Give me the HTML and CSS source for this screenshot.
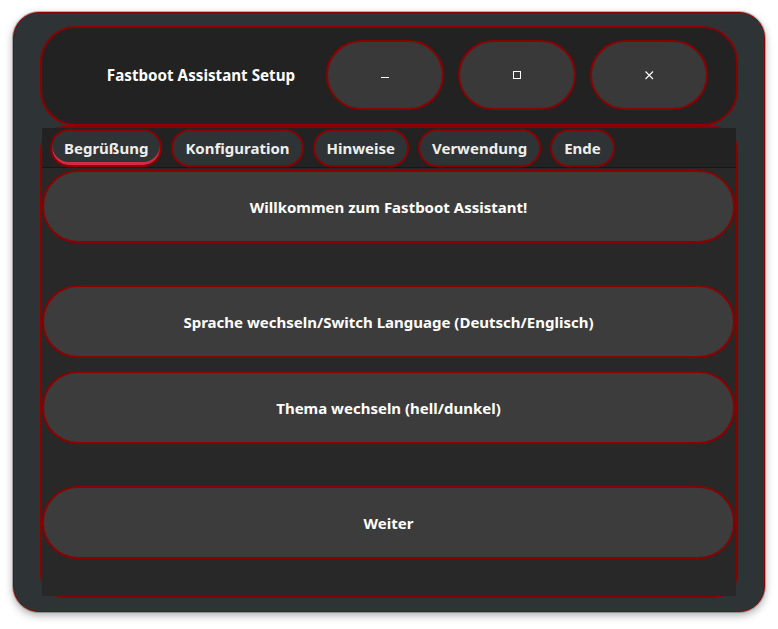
FILE: index.html
```html
<!DOCTYPE html>
<html lang="de">
<head>
<meta charset="utf-8">
<title>Fastboot Assistant Setup</title>
<link rel="stylesheet" href="styles.css">
</head>
<body>
<div class="window">
  <header class="headerbar">
    <div class="title">Fastboot Assistant Setup</div>
    <button class="wbtn" aria-label="Minimieren">
      <svg width="9" height="9" viewBox="0 0 9 9"><path d="M0 6.5H8" stroke="#fff" stroke-width="1"/></svg>
    </button>
    <button class="wbtn" aria-label="Maximieren">
      <svg width="9" height="9" viewBox="0 0 9 9"><rect x="0.5" y="0.5" width="7" height="7" fill="none" stroke="#fff" stroke-width="1"/></svg>
    </button>
    <button class="wbtn" aria-label="Schließen">
      <svg width="9" height="9" viewBox="0 0 9 9"><path d="M0.5 0.5L8 8M8 0.5L0.5 8" stroke="#fff" stroke-width="1.1"/></svg>
    </button>
  </header>
  <div class="stack">
    <div class="notebook">
      <nav class="tabs">
        <div class="tab active">Begrüßung</div>
        <div class="tab">Konfiguration</div>
        <div class="tab">Hinweise</div>
        <div class="tab">Verwendung</div>
        <div class="tab">Ende</div>
      </nav>
      <main class="page">
        <div class="pill first">Willkommen zum Fastboot Assistant!</div>
        <button class="pill gap-lg">Sprache wechseln/Switch Language (Deutsch/Englisch)</button>
        <button class="pill gap-sm">Thema wechseln (hell/dunkel)</button>
        <button class="pill gap-lg">Weiter</button>
      </main>
    </div>
  </div>
</div>
</body>
</html>
```

FILE: styles.css
```css
* { box-sizing: border-box; }

html, body {
  margin: 0;
  background: #ffffff;
}

body {
  padding: 12px 13px;
  font-family: "Noto Sans", "Open Sans", sans-serif;
  font-weight: 700;
  font-size: 15px;
  color: #ffffff;
}

.window {
  width: 752px;
  height: 600px;
  background: #2e3436;
  border: 1px solid #8b0000;
  border-radius: 26px;
  padding: 13px 26px;
  display: flex;
  flex-direction: column;
  box-shadow: 0 0 0 1px rgba(0,0,0,0.25), 0 3px 9px rgba(0,0,0,0.35);
}

.headerbar {
  height: 100px;
  flex: none;
  background: #222222;
  border: 2px solid #8b0000;
  border-radius: 36px;
  display: flex;
  align-items: center;
  gap: 14px;
  padding: 0 28px 2px 48px;
}

.title {
  flex: 1;
  text-align: center;
  white-space: nowrap;
  font-size: 15.2px;
}

.wbtn {
  width: 118px;
  height: 70px;
  flex: none;
  background: #393939;
  border: 2px solid #8b0000;
  border-radius: 35px;
  display: flex;
  align-items: center;
  justify-content: center;
  padding: 0;
}

.wbtn svg { display: block; }

.stack {
  flex: 1;
  border: 2px solid #8b0000;
  border-radius: 24px;
  display: flex;
}

.notebook {
  flex: 1;
  display: flex;
  flex-direction: column;
}

.tabs {
  height: 40px;
  flex: none;
  background: #222222;
  border-bottom: 1px solid #161616;
  display: flex;
  align-items: flex-start;
  gap: 9px;
  padding: 1px 8px 0;
}

.tab {
  height: 38px;
  padding: 0 12px;
  background: #2e3436;
  border: 2px solid #8b0000;
  border-radius: 19px;
  display: flex;
  align-items: center;
  color: #eeeeec;
  font-size: 15px;
  white-space: nowrap;
}

.tab.active {
  box-shadow: inset 0 -3px 0 #d42a45;
}

.page {
  flex: 1;
  background: #282828;
  display: flex;
  flex-direction: column;
  padding: 2px 1px 0 0;
}

.pill {
  height: 73px;
  flex: none;
  width: 100%;
  background: #3c3c3c;
  border: 2px solid #8b0000;
  border-radius: 36px;
  display: flex;
  align-items: center;
  justify-content: center;
  color: #ffffff;
  font: inherit;
  padding: 0;
}

.gap-lg { margin-top: 42px; }
.gap-sm { margin-top: 13px; }
```
